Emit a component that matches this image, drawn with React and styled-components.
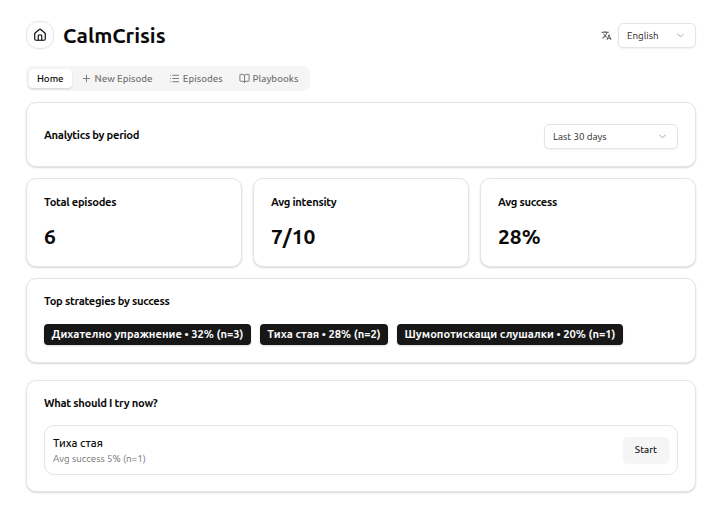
import React from "react";
import styled, { createGlobalStyle } from "styled-components";
import { House, Plus, List, BookOpen, ChevronDown } from "lucide-react";
import { MdTranslate } from "react-icons/md";

const GlobalStyle = createGlobalStyle`
  * { box-sizing: border-box; }
  body {
    margin: 0;
    background: #fff;
    color: #0a0a0a;
    font-family: Ubuntu, "Noto Sans", sans-serif;
  }
  button { font-family: inherit; margin: 0; }
`;

const Page = styled.div`
  width: 719px;
  height: 520px;
  padding: 21px 23px 0 26px;
  overflow: hidden;
`;

const Header = styled.header`
  display: flex;
  align-items: center;
  justify-content: space-between;
  height: 28px;
`;

const Brand = styled.div`
  display: flex;
  align-items: center;
  gap: 9px;
`;

const Logo = styled.div`
  display: grid;
  place-items: center;
  width: 28px;
  height: 28px;
  border: 1px solid #e5e5e5;
  border-radius: 12px;
  box-shadow: 0 1px 1px rgba(0, 0, 0, 0.04);
`;

const Label = styled.span`
  white-space: nowrap;
  letter-spacing: ${(p) => p.$track || 0}px;
`;

const AppName = styled.h1`
  margin: 0;
  font-size: 21px;
  line-height: 28px;
  font-weight: 600;
  letter-spacing: -0.05px;
`;

const Language = styled.div`
  display: flex;
  align-items: center;
  gap: 6px;
  padding-top: 1px;
  color: #525252;
`;

const Select = styled.button`
  display: flex;
  align-items: center;
  justify-content: space-between;
  width: ${(p) => p.$width}px;
  height: 25px;
  padding: 0 9px 0 8px;
  border: 1px solid #e5e5e5;
  border-radius: 5px;
  background: #fff;
  color: #262626;
  font-size: 9.8px;
  box-shadow: 0 1px 2px rgba(0, 0, 0, 0.06);
`;

const Tabs = styled.nav`
  display: flex;
  align-items: center;
  width: 284px;
  height: 25px;
  margin: 17px 0 11px;
  padding: 0 3px;
  border-radius: 7px;
  background: #f5f5f5;
`;

const Tab = styled.button`
  display: flex;
  align-items: center;
  justify-content: center;
  gap: ${(p) => p.$gap || 3}px;
  width: ${(p) => p.$width}px;
  height: 19px;
  padding: 0;
  border: 0;
  border-radius: 4px;
  font-size: 9.8px;
  font-weight: 500;
  background: ${(p) => (p.$active ? "#fff" : "transparent")};
  color: ${(p) => (p.$active ? "#0a0a0a" : "#737373")};
  box-shadow: ${(p) => (p.$active ? "0 1px 2px rgba(0, 0, 0, 0.14)" : "none")};
`;

const Card = styled.section`
  height: ${(p) => p.$height}px;
  margin-top: ${(p) => p.$top || 0}px;
  padding: ${(p) => p.$pad || 14}px 17px 0;
  border: 1px solid #e5e5e5;
  border-radius: 10px;
  background: #fff;
  box-shadow: 0 1px 2px rgba(0, 0, 0, 0.16);
`;

const PeriodCard = styled(Card)`
  display: flex;
  align-items: center;
  justify-content: space-between;
  padding-top: 4px;
`;

const CardTitle = styled.h2`
  margin: 0;
  font-size: 11.2px;
  line-height: 17px;
  font-weight: 600;
`;

const PeriodTitle = styled(CardTitle)`
  margin-bottom: 3px;
`;

const Stats = styled.div`
  display: grid;
  grid-template-columns: repeat(3, 216px);
  gap: 11px;
  margin-top: 11px;
`;

const StatValue = styled.div`
  margin-top: 11px;
  font-size: 21px;
  line-height: 28px;
  font-weight: 600;
`;

const Badges = styled.div`
  display: flex;
  gap: 9px;
  margin-top: 14px;
`;

const Badge = styled.span`
  display: flex;
  align-items: center;
  justify-content: center;
  width: ${(p) => p.$width}px;
  height: 21px;
  border-radius: 4px;
  background: #171717;
  color: #fafafa;
  font-size: 11.2px;
  line-height: 13px;
  padding-bottom: 1px;
  font-weight: 600;
  box-shadow: 0 1px 2px rgba(0, 0, 0, 0.15);
`;

const Suggestion = styled.div`
  display: flex;
  align-items: center;
  justify-content: space-between;
  height: 50px;
  margin-top: 13px;
  padding: 0 8px;
  border: 1px solid #e5e5e5;
  border-radius: 10px;
`;

const SuggestionName = styled.div`
  font-size: 11.2px;
  line-height: 16px;
  font-weight: 500;
`;

const SuggestionMeta = styled.div`
  font-size: 9.8px;
  line-height: 15px;
  color: #737373;
`;

const StartButton = styled.button`
  width: 46px;
  height: 26px;
  padding: 0 0 2px;
  border: 0;
  border-radius: 5px;
  background: #f5f5f5;
  color: #171717;
  font-size: 9.8px;
  font-weight: 500;
  box-shadow: 0 1px 2px rgba(0, 0, 0, 0.05);
`;

const stats = [
  { title: "Total episodes", value: "6" },
  { title: "Avg intensity", value: "7/10" },
  { title: "Avg success", value: "28%" },
];

const strategies = [
  { text: "Дихателно упражнение • 32% (n=3)", width: 207 },
  { text: "Тиха стая • 28% (n=2)", width: 128 },
  { text: "Шумопотискащи слушалки • 20% (n=1)", width: 226 },
];

export default function App() {
  return (
    <>
      <GlobalStyle />
      <Page>
        <Header>
          <Brand>
            <Logo><House size={14} strokeWidth={2} /></Logo>
            <AppName>CalmCrisis</AppName>
          </Brand>
          <Language>
            <MdTranslate size={11} />
            <Select $width={78}>
              <Label>English</Label>
              <ChevronDown size={11} color="#999" />
            </Select>
          </Language>
        </Header>

        <Tabs>
          <Tab $active $width={43}><Label>Home</Label></Tab>
          <Tab $width={91}><Plus size={11} /><Label>New Episode</Label></Tab>
          <Tab $width={69}><List size={11} /><Label>Episodes</Label></Tab>
          <Tab $width={78} $gap={3}><BookOpen size={11} /><Label>Playbooks</Label></Tab>
        </Tabs>

        <PeriodCard $height={65}>
          <PeriodTitle><Label $track={-0.28}>Analytics by period</Label></PeriodTitle>
          <Select $width={134}>
            <Label>Last 30 days</Label>
            <ChevronDown size={11} color="#999" />
          </Select>
        </PeriodCard>

        <Stats>
          {stats.map((s) => (
            <Card key={s.title} $height={89} $pad={15}>
              <CardTitle><Label $track={-0.28}>{s.title}</Label></CardTitle>
              <StatValue><Label>{s.value}</Label></StatValue>
            </Card>
          ))}
        </Stats>

        <Card $height={85} $top={11}>
          <CardTitle><Label $track={-0.28}>Top strategies by success</Label></CardTitle>
          <Badges>
            {strategies.map((s) => (
              <Badge key={s.text} $width={s.width}><Label>{s.text}</Label></Badge>
            ))}
          </Badges>
        </Card>

        <Card $height={112} $top={17}>
          <CardTitle><Label $track={-0.28}>What should I try now?</Label></CardTitle>
          <Suggestion>
            <div>
              <SuggestionName><Label>Тиха стая</Label></SuggestionName>
              <SuggestionMeta><Label>Avg success 5% (n=1)</Label></SuggestionMeta>
            </div>
            <StartButton><Label>Start</Label></StartButton>
          </Suggestion>
        </Card>
      </Page>
    </>
  );
}
